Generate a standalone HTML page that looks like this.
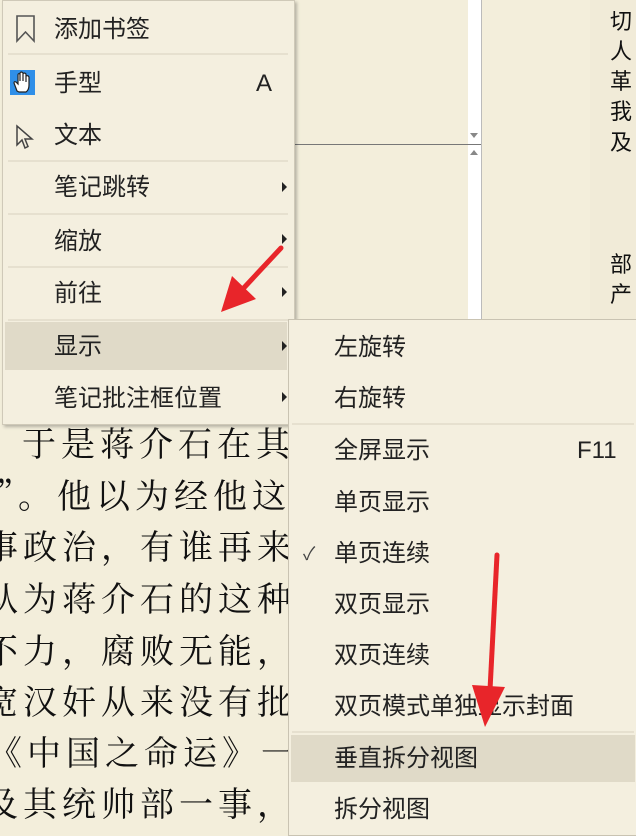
<!DOCTYPE html><html><head><meta charset="utf-8"><style>
body{margin:0;width:636px;height:832px;overflow:hidden;background:#f3eedb;position:relative;font-family:"Liberation Sans","Noto Sans CJK SC",sans-serif}
.a{position:absolute}
.t{position:absolute;font-size:24px;color:#222;line-height:28px;white-space:nowrap}
.sep{position:absolute;height:2px;background:#e6e0cf}
.arr{position:absolute;width:0;height:0;border-left:5px solid #222;border-top:5px solid transparent;border-bottom:5px solid transparent}
.bk{position:absolute;font-family:"Noto Serif CJK SC",serif;font-size:34px;color:#111;white-space:nowrap;line-height:40px;letter-spacing:5px}
.rc{position:absolute;left:610px;font-size:22px;color:#111;line-height:24px}
</style></head><body>
<div class="a" style="left:468px;top:0;width:13px;height:320px;background:#fff"></div>
<div class="a" style="left:481px;top:0;width:1px;height:320px;background:#bbb"></div>
<div class="a" style="left:295px;top:144px;width:186px;height:1px;background:#777"></div>
<div class="a" style="left:470px;top:133px;border-left:4px solid transparent;border-right:4px solid transparent;border-top:5px solid #888"></div>
<div class="a" style="left:470px;top:150px;border-left:4px solid transparent;border-right:4px solid transparent;border-bottom:5px solid #888"></div>
<div class="a" style="left:590px;top:0;width:46px;height:320px;background:#f1ebd8"></div>
<div class="rc" style="top:10px">切</div><div class="rc" style="top:40px">人</div><div class="rc" style="top:70px">革</div><div class="rc" style="top:100px">我</div><div class="rc" style="top:131px">及</div>
<div class="rc" style="top:253px">部</div><div class="rc" style="top:283px">产</div>
<div class="bk" style="left:22px;top:422px">于是蒋介石在其</div>
<div class="bk" style="left:-4px;top:474px">”。他以为经他这</div>
<div class="bk" style="left:-16px;top:525px">事政治，有谁再来</div>
<div class="bk" style="left:-16px;top:577px">从为蒋介石的这种</div>
<div class="bk" style="left:-16px;top:629px">不力，腐败无能，</div>
<div class="bk" style="left:-16px;top:680px">宽汉奸从来没有批</div>
<div class="bk" style="left:-12px;top:731px">《中国之命运》一</div>
<div class="bk" style="left:-16px;top:782px">及其统帅部一事，</div>
<!-- left menu -->
<div class="a" style="left:2px;top:0;width:291px;height:423px;background:#f4efdf;border:1px solid #cfc9b8;box-shadow:2px 2px 3px rgba(0,0,0,.25)"></div>
<div class="a" style="left:5px;top:322px;width:282px;height:48px;background:#e0dac8"></div>
<svg class="a" style="left:15px;top:14px" width="22" height="30"><path d="M2 2H19V27L10.5 18L2 27Z" fill="none" stroke="#555" stroke-width="1.6"/></svg>
<div class="a" style="left:10px;top:70px;width:25px;height:25px;background:#2f8fe8"></div>
<svg class="a" style="left:10px;top:70px" width="25" height="25"><path d="M7 21L4 13Q4 11 6 12L8 14V5Q8 3 10 4V11V3Q11 1 13 3V11V4Q14 2 16 4V12V6Q18 5 19 7V15Q19 20 16 22H9Z" fill="#fff" stroke="#222" stroke-width="1.2"/></svg>
<svg class="a" style="left:15px;top:124px" width="20" height="26"><path d="M2 2V21L7 16L10 24L13 22.5L10 15H17Z" fill="none" stroke="#444" stroke-width="1.5"/></svg>
<div class="t" style="left:54px;top:16px">添加书签</div>
<div class="sep" style="left:8px;top:53px;width:280px"></div>
<div class="t" style="left:54px;top:70px">手型</div><div class="t" style="left:256px;top:70px">A</div>
<div class="t" style="left:54px;top:122px">文本</div>
<div class="sep" style="left:8px;top:160px;width:280px"></div>
<div class="t" style="left:54px;top:174px">笔记跳转</div><div class="arr" style="left:282px;top:182px"></div>
<div class="sep" style="left:8px;top:213px;width:280px"></div>
<div class="t" style="left:54px;top:228px">缩放</div><div class="arr" style="left:282px;top:234px"></div>
<div class="sep" style="left:8px;top:266px;width:280px"></div>
<div class="t" style="left:54px;top:280px">前往</div><div class="arr" style="left:282px;top:287px"></div>
<div class="sep" style="left:8px;top:319px;width:280px"></div>
<div class="t" style="left:54px;top:333px">显示</div><div class="arr" style="left:282px;top:341px"></div>
<div class="t" style="left:54px;top:385px">笔记批注框位置</div><div class="arr" style="left:282px;top:392px"></div>
<!-- right submenu -->
<div class="a" style="left:288px;top:319px;width:350px;height:515px;background:#f4efdf;border:1px solid #c9c3b2"></div>
<div class="a" style="left:291px;top:735px;width:344px;height:47px;background:#e0dac8"></div>
<div class="t" style="left:334px;top:334px">左旋转</div>
<div class="t" style="left:334px;top:385px">右旋转</div>
<div class="sep" style="left:292px;top:423px;width:342px"></div>
<div class="t" style="left:334px;top:437px">全屏显示</div><div class="t" style="left:577px;top:437px">F11</div>
<div class="t" style="left:334px;top:489px">单页显示</div>
<div class="t" style="left:303px;top:540px;font-size:18px;color:#444">✓</div>
<div class="t" style="left:334px;top:540px">单页连续</div>
<div class="t" style="left:334px;top:591px">双页显示</div>
<div class="t" style="left:334px;top:642px">双页连续</div>
<div class="t" style="left:334px;top:693px">双页模式单独显示封面</div>
<div class="sep" style="left:292px;top:731px;width:342px"></div>
<div class="t" style="left:334px;top:745px">垂直拆分视图</div>
<div class="t" style="left:334px;top:796px">拆分视图</div>
<!-- arrows -->
<svg class="a" style="left:0;top:0" width="636" height="832">
<path d="M281 248L240 292" stroke="#e8252a" stroke-width="5" stroke-linecap="round"/>
<path d="M221 312L232 276L256 299Z" fill="#e8252a"/>
<path d="M497 555L490 690" stroke="#e8252a" stroke-width="5" stroke-linecap="round"/>
<path d="M485 727L472 685L505 687Z" fill="#e8252a"/>
</svg>
</body></html>
